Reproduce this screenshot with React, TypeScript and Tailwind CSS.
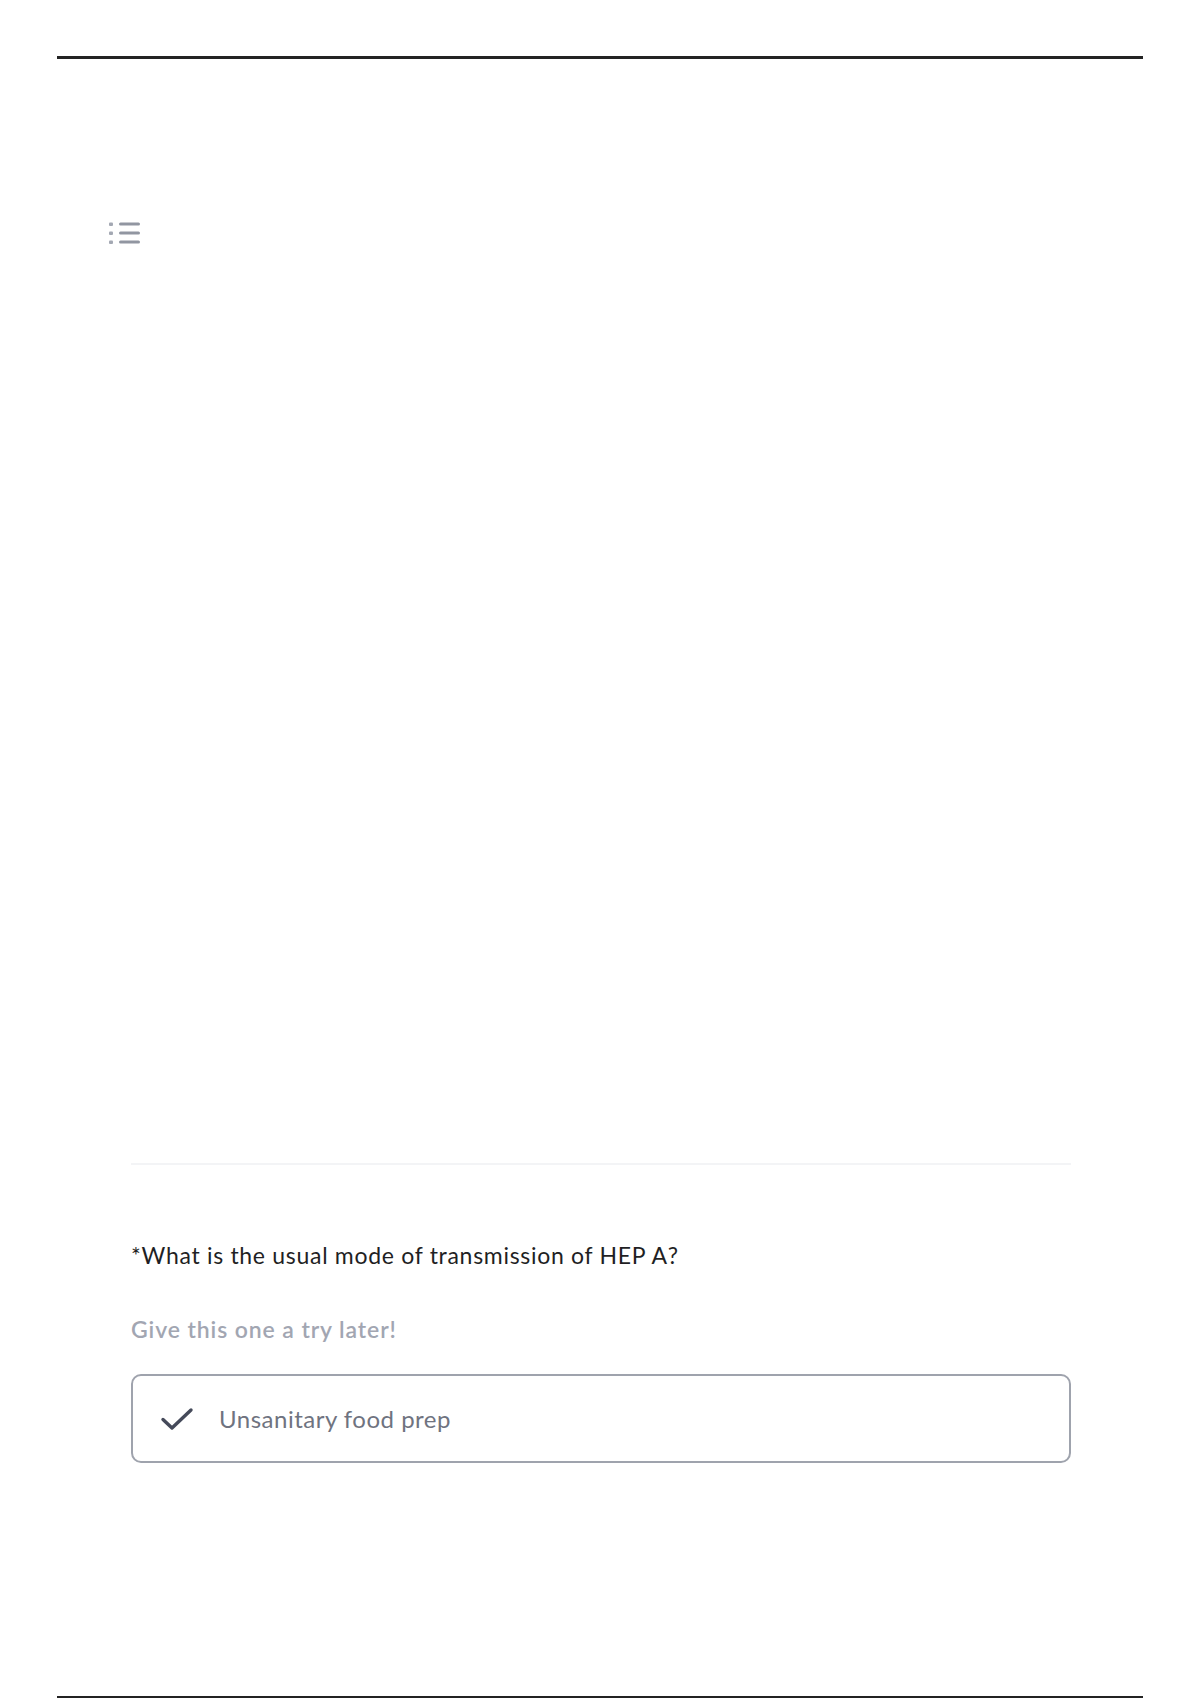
import React from 'react';

const ListIcon = () => (
  <svg width="32" height="23" viewBox="0 0 32 23" fill="none">
    <rect x="0" y="0.5" width="4" height="3.5" rx="1" fill="#a3a8b3" />
    <rect x="0" y="9.5" width="4" height="3.5" rx="1" fill="#a3a8b3" />
    <rect x="0" y="18.5" width="4" height="3.5" rx="1" fill="#a3a8b3" />
    <rect x="10" y="0.5" width="21" height="3" rx="1.5" fill="#9196a1" />
    <rect x="10" y="9.5" width="21" height="3" rx="1.5" fill="#9196a1" />
    <rect x="10" y="18.5" width="21" height="3" rx="1.5" fill="#9196a1" />
  </svg>
);

const Check = () => (
  <svg width="34" height="24" viewBox="0 0 34 24" fill="none">
    <path d="M3 12.5 L12 21 L31 3" stroke="#454a5a" strokeWidth="3.4" strokeLinecap="round" strokeLinejoin="round" />
  </svg>
);

export default function App() {
  return (
    <div
      className="h-[1700px] bg-white px-[57px] pt-[56px]"
      style={{ fontFamily: 'Lato, "Open Sans", sans-serif' }}
    >
      {/* top rule */}
      <div className="h-[3px] bg-[#232323]" />

      <div className="ml-[52px] mt-[163px]">
        <ListIcon />
      </div>

      <div className="ml-[74px] mr-[72px] mt-[918px]">
        <div className="h-[2px] bg-[#f3f4f6]" />

        <p className="mt-[74px] text-[23px] leading-[32px] tracking-[0.7px] text-[#1f1f24]">
          *What is the usual mode of transmission of HEP A?
        </p>

        <p className="mt-[43px] text-[23px] leading-[30px] tracking-[0.9px] font-semibold text-[#a2a6b2]">
          Give this one a try later!
        </p>

        <div className="mt-[30px] flex h-[89px] items-center rounded-[10px] border-2 border-[#9fa3ad] pl-[27px]">
          <Check />
          <span className="ml-[25px] text-[24px] tracking-[0.5px] text-[#6f7380]">Unsanitary food prep</span>
        </div>
      </div>

      {/* bottom rule */}
      <div className="mt-[233px] h-[2px] bg-[#232323]" />
    </div>
  );
}
